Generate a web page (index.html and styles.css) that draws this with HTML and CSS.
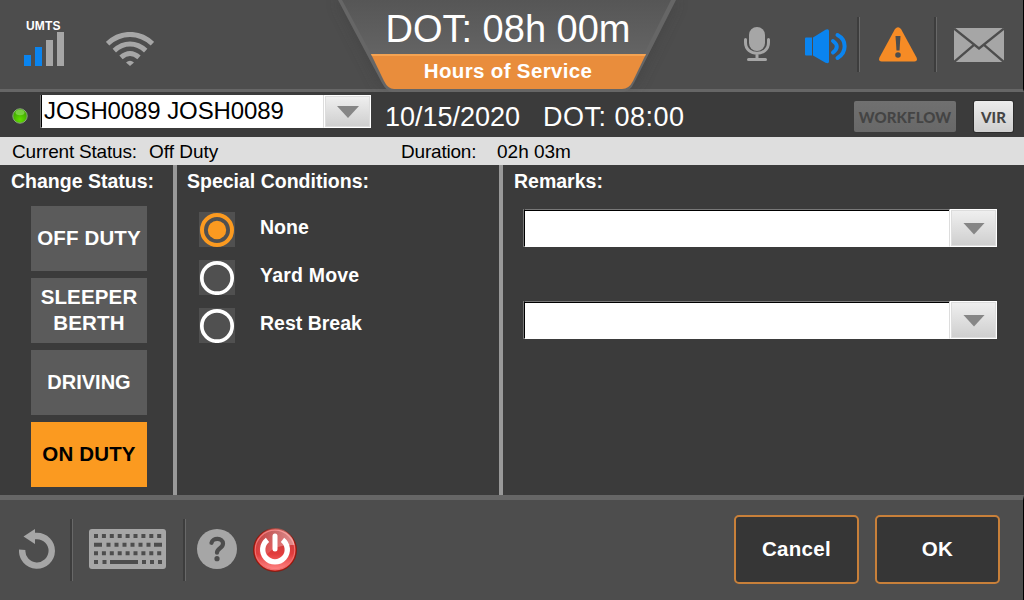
FILE: index.html
```html
<!DOCTYPE html>
<html lang="en">
<head>
<meta charset="utf-8">
<title>Hours of Service</title>
<link rel="stylesheet" href="styles.css">
</head>
<body>
<div class="screen">
  <header class="top">
    <div class="top-left">
      <div class="signal">
        <span class="umts">UMTS</span>
        <svg width="40" height="34" viewBox="0 0 40 34"><path fill="#0a84ef" d="M0 23h7v11H0zM11 15h7v19h-7z"/><path fill="#a6a6a6" d="M22 8h7v26h-7zM33 0h7v34h-7z"/></svg>
      </div>
      <svg class="wifi" width="48" height="34" viewBox="0 0 48 34"><g fill="none" stroke="#a6a6a6" stroke-width="5"><path d="M1.600 11.600Q11.500 2.400 24 2.400T46.400 11.600"/><path d="M8.300 18.600Q15.500 12 24 12T39.700 18.600"/><path d="M15 25.400Q19.500 21.500 24 21.500T33 25.400"/></g><path fill="#a6a6a6" d="M20 30.500q4-3.500 8 0L24 34z"/></svg>
    </div>
    <div class="badge">
      <svg class="badge-shape" width="350" height="92" viewBox="0 0 350 92">
        <defs>
          <linearGradient id="grey" x2="0" y2="1"><stop stop-color="#565656"/><stop offset="1" stop-color="#646464"/></linearGradient>
          <filter id="soft" x="-20%" y="-20%" width="140%" height="140%"><feGaussianBlur stdDeviation="7"/></filter>
        </defs>
        <path fill="#3c3c3c" opacity=".5" filter="url(#soft)" d="M0 0H338L296 86H44z"/>
        <path fill="#666" d="M0 0H338L296 83Q292 92 284 92H54Q49 92 44 83z"/>
        <path fill="url(#grey)" d="M4 0H333L306 54H33z"/>
        <path fill="#e98d3c" d="M33 54H308L295 81Q291 89 284 89H56Q50 89 46 81z"/>
        <path fill="#f5a352" d="M33 54H308L307 56H34z"/>
      </svg>
      <span class="badge-time">DOT: 08h 00m</span>
      <span class="badge-title">Hours of Service</span>
    </div>
    <div class="top-right">
      <svg class="mic" width="28" height="35" viewBox="0 0 28 35"><rect x="6" y="0" width="16" height="24" rx="8" fill="#a6a6a6"/><g fill="none" stroke="#a6a6a6" stroke-width="3" stroke-linecap="round"><path d="M2.500 12.500V15.500C2.500 29.800 25.500 29.800 25.500 15.500V12.500M14 27V32"/><path d="M5.500 32.500h17"/></g></svg>
      <svg class="speaker" width="43" height="35" viewBox="0 0 43 35"><path fill="#0a84ef" d="M1 8.500h6V26.500H1Q0 26.500 0 25.500V9.500Q0 8.500 1 8.500zM8 8.500L20.500 .8Q24 -.5 24 2V32.500Q24 35 20.500 33.700L8 26.500z"/><g fill="none" stroke="#0a84ef" stroke-width="4" stroke-linecap="round"><path d="M28 12Q35.500 17.500 28 23.500M32.500 6C42 11 42 23.500 32.500 29"/></g></svg>
      <i class="divider"></i>
      <svg class="warn" width="38" height="35" viewBox="0 0 38 35"><path fill="#f68b25" d="M16 2Q19-1.500 22 2L37.500 30.500Q39 34.500 35.500 34.500H2.500Q-1 34.500.5 30.500z"/><path fill="#4d4d4d" d="M16.500 9h5l-1 14.500h-3z"/><circle cx="19" cy="28" r="2.800" fill="#4d4d4d"/></svg>
      <i class="divider"></i>
      <svg class="mail" width="50" height="34" viewBox="0 0 50 34"><path fill="#a6a6a6" d="M0 0h50v34H0z"/><path fill="none" stroke="#4d4d4d" stroke-width="2.400" d="M0 .5L25 20.500 50 .5M0 34L20 16.800M50 34L30 16.800"/></svg>
    </div>
  </header>

  <section class="driver">
    <svg class="led" width="16" height="16" viewBox="0 0 16 16"><defs><radialGradient id="led" cy=".75"><stop stop-color="#63e000"/><stop offset="1" stop-color="#45b000"/></radialGradient></defs><circle cx="8" cy="8" r="7.200" fill="url(#led)" stroke="#8aa67c"/><ellipse cx="8" cy="4.500" rx="4.500" ry="2.800" fill="#a2e777" opacity=".55"/></svg>
    <div class="combo combo-driver"><span class="combo-text">JOSH0089 JOSH0089</span><span class="combo-btn"><i class="arrow"></i></span></div>
    <span class="date">10/15/2020</span>
    <span class="dot">DOT: 08:00</span>
    <button class="mini workflow">WORKFLOW</button>
    <button class="mini vir">VIR</button>
  </section>

  <section class="status">
    <span class="label">Current Status:</span>
    <span>Off Duty</span>
    <span class="label">Duration:</span>
    <span>02h 03m</span>
  </section>

  <main class="main">
    <section class="col col-status">
      <h2>Change Status:</h2>
      <div class="duties">
        <button class="duty">OFF DUTY</button>
        <button class="duty">SLEEPER<br>BERTH</button>
        <button class="duty driving">DRIVING</button>
        <button class="duty active">ON DUTY</button>
      </div>
    </section>
    <section class="col col-cond">
      <h2>Special Conditions:</h2>
      <div class="radios">
        <div class="radio"><svg width="36" height="35"><circle cx="18" cy="18" r="15" fill="none" stroke="#fb9a20" stroke-width="4"/><circle cx="18" cy="18" r="9.200" fill="#fb9a20"/></svg><span>None</span></div>
        <div class="radio"><svg width="36" height="35"><circle cx="18" cy="18" r="15.200" fill="none" stroke="#fff" stroke-width="3.700"/></svg><span class="wide">Yard Move</span></div>
        <div class="radio"><svg width="36" height="35"><circle cx="18" cy="18" r="15.200" fill="none" stroke="#fff" stroke-width="3.700"/></svg><span>Rest Break</span></div>
      </div>
    </section>
    <section class="col col-remarks">
      <h2>Remarks:</h2>
      <div class="fields">
        <div class="combo"><span class="combo-text"></span><span class="combo-btn"><i class="arrow"></i></span></div>
        <div class="combo"><span class="combo-text"></span><span class="combo-btn"><i class="arrow"></i></span></div>
      </div>
    </section>
  </main>

  <footer class="bottom">
    <svg class="undo" width="36" height="40" viewBox="0 0 36 40"><path fill="none" stroke="#a6a6a6" stroke-width="6.400" d="M3.200 20.700A14.800 14.800 0 1 0 18 7H15"/><path fill="#a6a6a6" d="M4.500 7.500L16 0V15z"/></svg>
    <i class="divider d1"></i>
    <svg class="keyboard" width="77" height="40" viewBox="0 0 77 40"><rect width="77" height="40" rx="3" fill="#a6a6a6"/><g stroke="#4d4d4d" stroke-width="4" fill="none"><path stroke-dasharray="4 3.900" d="M5 7h68"/><path d="M5 15.800h8M65 15.800h8"/><path stroke-dasharray="4 4" d="M17.500 15.800h44.500"/><path stroke-dasharray="4 3.900" d="M5 24.300h68"/><path d="M5 33h4M13.500 33h4M21 33h28M53 33h4M61 33h4M69 33h4"/></g></svg>
    <i class="divider d2"></i>
    <svg class="help" width="40" height="40" viewBox="0 0 40 40"><circle cx="20" cy="20" r="20" fill="#a6a6a6"/><path fill="none" stroke="#4d4d4d" stroke-width="4.200" stroke-linecap="round" d="M14.500 13.800C15.500 8.500 26 8.500 26 14.500C26 19.500 20 19 20 23.700"/><circle cx="20" cy="29.700" r="2.600" fill="#4d4d4d"/></svg>
    <svg class="power" width="44" height="46" viewBox="0 0 44 46"><defs><linearGradient id="red" x2="0" y2="1"><stop stop-color="#b84040"/><stop offset=".6" stop-color="#e23c3c"/><stop offset="1" stop-color="#ff8585"/></linearGradient><linearGradient id="shine" x2="1" y2="0"><stop stop-color="#fff" stop-opacity="0"/><stop offset="1" stop-color="#fff" stop-opacity=".42"/></linearGradient></defs><circle cx="22" cy="23" r="21.500" fill="#c71b12" stroke="#7f2016"/><circle cx="22" cy="23" r="19.800" fill="url(#red)" stroke="#ee7070" stroke-width="1.200"/><path fill="url(#shine)" d="M3 23A19 19 0 0 1 41.500 18Q23 17 14 27Q8 31 3 23z"/><path fill="none" stroke="#fff" stroke-width="5.400" d="M14.500 12.800A12.300 12.300 0 1 0 29.500 12.800"/><path stroke="#fff" stroke-width="5" stroke-linecap="round" d="M22 9V22"/></svg>
    <div class="actions">
      <button class="action">Cancel</button>
      <button class="action">OK</button>
    </div>
  </footer>
</div>
</body>
</html>
```
FILE: styles.css
```css
* { box-sizing: border-box; }
body { margin: 0; background: #000; font-family: "Liberation Sans", Arial, sans-serif; }
button { font-family: inherit; padding: 0; border: 0; margin: 0; }
svg { display: block; flex: none; }
h2 { margin: 0; font-size: 19.5px; line-height: 22px; white-space: nowrap; }
span { white-space: nowrap; }

.screen {
  width: 1024px; height: 600px; overflow: hidden; color: #fff; background: #3b3b3b;
  display: grid; grid-template-rows: 92px 45px 28px 330px 105px;
}

.top {
  display: grid; grid-template-columns: 338px 350px 1fr;
  background: #4d4d4d; border-bottom: 3px solid #666; border-right: 1px solid #000;
}
.top-left { display: flex; align-items: flex-start; padding: 20px 0 0 24px; }
.signal { width: 40px; }
.umts { display: block; padding-left: 2px; font-size: 12px; line-height: 12px; font-weight: bold; letter-spacing: .2px; }
.wifi { margin: 12px 0 0 42px; }
.badge { display: grid; grid-template-columns: 340px; grid-template-rows: 56px 33px; height: 92px; width: 340px; justify-items: center; }
.badge-shape, .badge-time, .badge-title { grid-column: 1; }
.badge-shape { grid-row: 1 / 3; justify-self: start; overflow: visible; }
.badge-time { grid-row: 1; font-size: 38px; line-height: 59px; }
.badge-title { grid-row: 2; font-size: 20.5px; line-height: 30px; font-weight: bold; letter-spacing: .35px; }
.top-right { display: flex; align-items: flex-start; padding-left: 55px; }
.divider { width: 3px; height: 55px; background: linear-gradient(90deg, #3d3d3d 2px, #686868 2px); flex: none; }
.mic { margin-top: 27px; }
.speaker { margin: 29px 0 0 34px; }
.top-right .divider { margin-top: 17px; margin-left: 9px; }
.warn { margin: 27px 0 0 19px; }
.top-right .warn + .divider { margin-left: 17px; }
.mail { margin: 28px 0 0 17px; }

.driver { display: flex; align-items: flex-start; padding-left: 12px; background: #3b3b3b; }
.led { margin-top: 16px; }
.combo {
  display: grid; grid-template-columns: 1fr 47px; width: 474px; height: 38px;
  color: #000; background: #fff; border-left: 1px solid #777;
}
.combo-text { border-top: 1px solid #777; border-left: 1px solid #000; border-right: 1px solid #ddd; border-bottom: 1px solid #fff; box-shadow: inset 0 1px #000; }
.combo-btn {
  display: flex; align-items: center; justify-content: center;
  border: 1px solid #fff; background: linear-gradient(#f0f0f0, #cecece); box-shadow: inset 0 0 0 1px #ddd;
}
.arrow { width: 22px; height: 12px; margin-top: 1px; margin-left: 1px; background: #868686; clip-path: polygon(0 0, 100% 0, 50% 100%); }
.combo-driver { width: 331px; height: 33px; margin: 3px 0 0 12px; }
.combo-driver .combo-text { padding-left: 2px; font-size: 24px; line-height: 31px; letter-spacing: -.1px; border-top: 0; box-shadow: none; }
.date { margin-left: 14px; width: 158px; font-size: 27px; line-height: 50px; }
.dot { width: 311px; font-size: 27px; line-height: 50px; letter-spacing: .5px; }
.mini { height: 31px; margin-top: 9px; border-radius: 2px; font-family: Lato, sans-serif; font-weight: 900; color: #444; }
.workflow { width: 102px; font-size: 15px; letter-spacing: .1px; background: linear-gradient(#707070, #686868); }
.vir { width: 39px; margin-left: 18px; font-size: 15px; background: linear-gradient(#ececec, #cfcfcf); box-shadow: 0 0 0 1px #2c2c2c; }

.status {
  display: grid; grid-template-columns: 137px 252px 96px 1fr; padding-left: 12px;
  color: #000; background: #dedede; font-size: 19px; line-height: 30px;
}
.label { letter-spacing: -.2px; }

.main { display: grid; grid-template-columns: 177px 326px 1fr; }
.col { padding: 5px 0 0 11px; }
.col-status, .col-cond { border-right: 4px solid #999; }
.col-cond { padding-left: 10px; }
.duties { display: grid; gap: 7px; padding: 14px 0 0 20px; }
.duty {
  width: 116px; height: 65px; padding-bottom: 2px; color: #fff; background: #5b5b5b;
  font-size: 20.5px; line-height: 26px; font-weight: bold; letter-spacing: .15px;
}
.driving { font-size: 20px; letter-spacing: 0; }
.active { color: #000; background: #fb9a20; }
.radios { display: grid; gap: 13px; padding: 20px 0 0 12px; }
.radio { display: flex; gap: 25px; font-size: 19.5px; font-weight: bold; line-height: 30px; }
.radio svg { background: #505050; }
.wide { letter-spacing: .2px; }
.fields { display: grid; gap: 54px; padding: 17px 0 0 9px; }

.bottom {
  display: flex; align-items: flex-start; padding-left: 19px;
  background: #4d4d4d; border-top: 5px solid #666; border-right: 1px solid #000;
}
.undo { margin-top: 29px; }
.bottom .divider { height: 62px; margin-top: 19px; }
.d1 { margin-left: 15px; }
.keyboard { margin: 29px 0 0 16px; }
.d2 { margin-left: 17px; }
.help { margin: 29px 0 0 11px; }
.power { margin: 27px 0 0 16px; }
.actions { display: flex; gap: 16px; padding-top: 15px; margin-left: 437px; }
.action {
  width: 125px; height: 69px; color: #fff; background: #363636; padding-bottom: 1px;
  border: 2px solid #c8803a; border-radius: 5px; font-size: 20.5px; font-weight: bold; letter-spacing: .3px;
}
```
